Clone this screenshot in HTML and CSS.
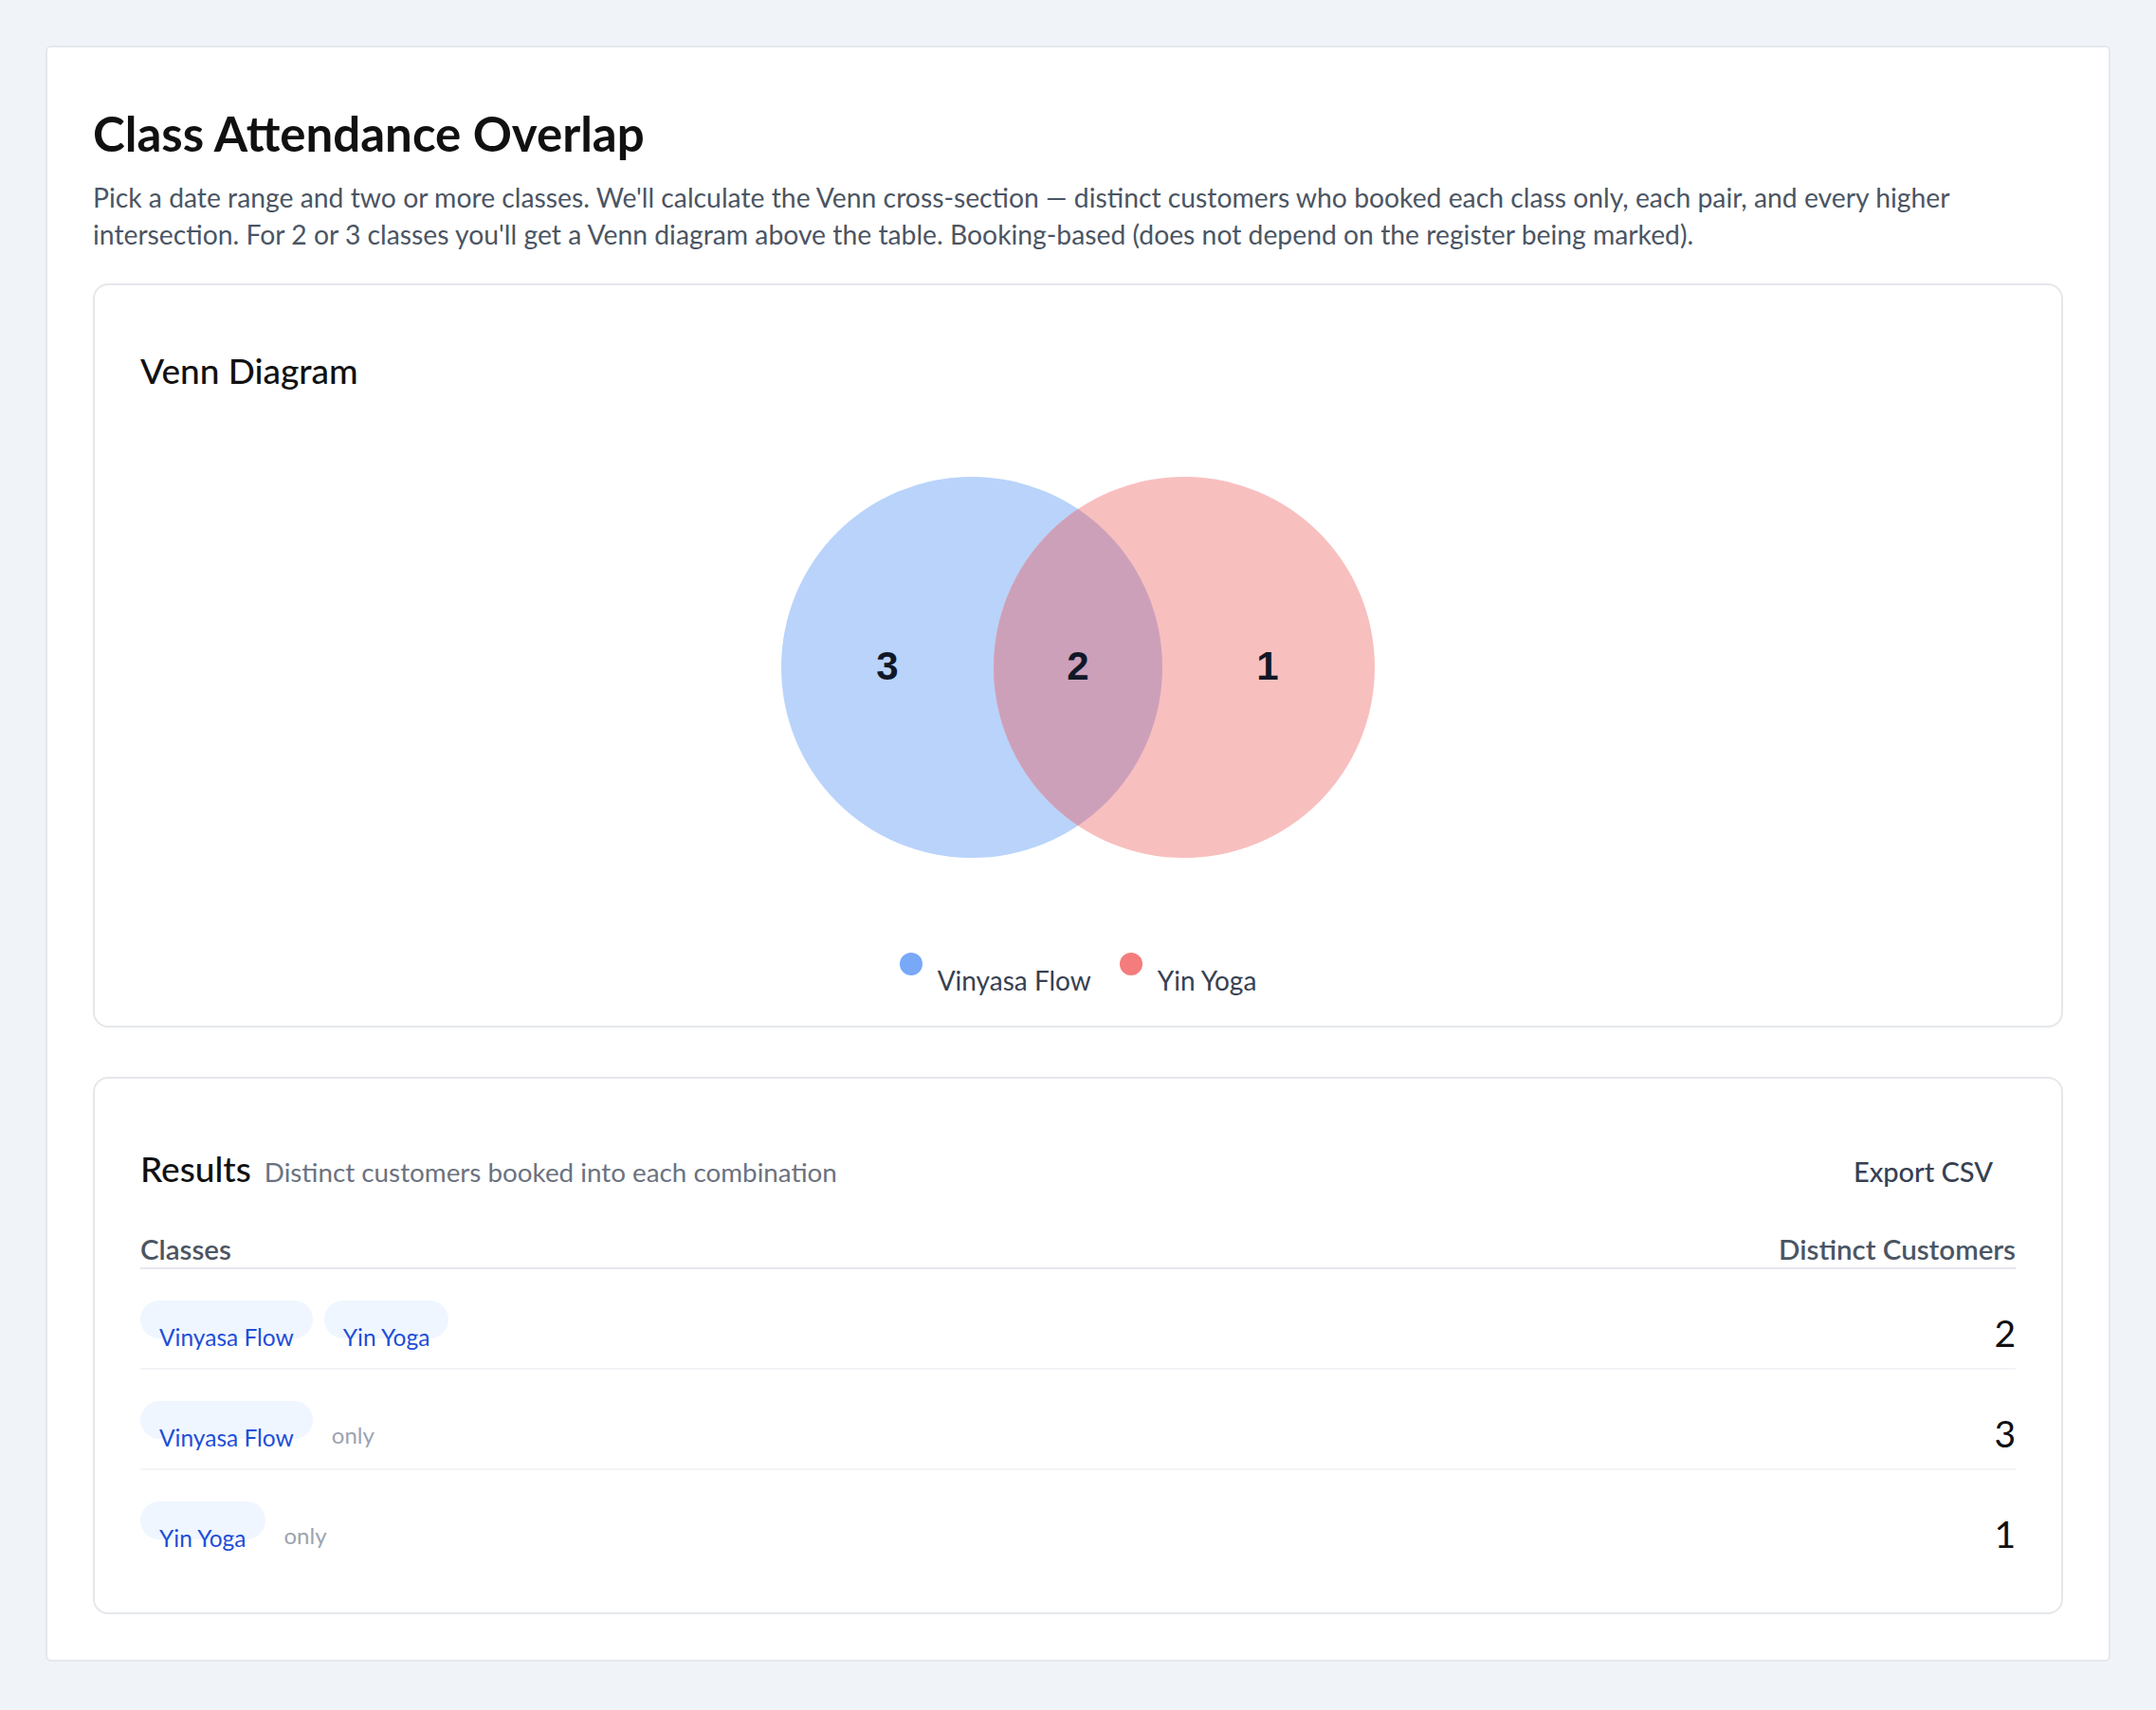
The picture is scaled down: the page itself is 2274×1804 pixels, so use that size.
FILE: index.html
```html
<!DOCTYPE html>
<html lang="en">
<head>
<meta charset="utf-8">
<title>Class Attendance Overlap</title>
<link rel="stylesheet" href="styles.css">
</head>
<body>
<main class="page">
  <h1 class="title">Class Attendance Overlap</h1>
  <p class="intro">Pick a date range and two or more classes. We'll calculate the Venn cross-section — distinct customers who booked each class only, each pair, and every higher intersection. For 2 or 3 classes you'll get a Venn diagram above the table. Booking-based (does not depend on the register being marked).</p>

  <section class="card venn-card">
    <h2 class="card-title">Venn Diagram</h2>
    <div class="venn-wrap">
      <svg class="venn" width="660" height="442" viewBox="0 0 660 442" aria-label="Venn diagram">
        <defs>
          <clipPath id="clipLeft"><circle cx="218" cy="221" r="201"/></clipPath>
        </defs>
        <circle cx="218" cy="221" r="201" fill="#b9d3fb"/>
        <circle cx="442" cy="221" r="201" fill="#f8bfbf"/>
        <circle cx="442" cy="221" r="201" fill="#cda0ba" clip-path="url(#clipLeft)"/>
        <text class="venn-num" x="129" y="234" text-anchor="middle">3</text>
        <text class="venn-num" x="330" y="234" text-anchor="middle">2</text>
        <text class="venn-num" x="530" y="234" text-anchor="middle">1</text>
      </svg>
    </div>
    <div class="legend">
      <div class="legend-item"><span class="dot dot-blue"></span><span class="legend-label">Vinyasa Flow</span></div>
      <div class="legend-item"><span class="dot dot-red"></span><span class="legend-label">Yin Yoga</span></div>
    </div>
  </section>

  <section class="card results-card">
    <div class="results-head">
      <div class="results-titles">
        <h2 class="card-title">Results</h2>
        <span class="results-sub">Distinct customers booked into each combination</span>
      </div>
      <button class="export-btn" type="button">Export CSV</button>
    </div>
    <div class="table">
      <div class="thead">
        <div class="th">Classes</div>
        <div class="th th-right">Distinct Customers</div>
      </div>
      <div class="row">
        <div class="cell-classes"><span class="pill">Vinyasa Flow</span><span class="pill">Yin Yoga</span></div>
        <div class="cell-num">2</div>
      </div>
      <div class="row">
        <div class="cell-classes"><span class="pill">Vinyasa Flow</span><span class="only">only</span></div>
        <div class="cell-num">3</div>
      </div>
      <div class="row row-last">
        <div class="cell-classes"><span class="pill">Yin Yoga</span><span class="only">only</span></div>
        <div class="cell-num">1</div>
      </div>
    </div>
  </section>
</main>
</body>
</html>
```

FILE: styles.css
```css
* { box-sizing: border-box; }

html, body {
  margin: 0;
  padding: 0;
}

body {
  background: #f0f4f9;
  padding: 48px;
  font-family: "Lato", "Noto Sans", sans-serif;
  color: #111111;
}

.page {
  background: #ffffff;
  border: 2px solid #e5e7eb;
  border-radius: 6px;
  padding: 48px 48px 48px;
}

.title {
  margin: 14px 0 0;
  font-size: 51px;
  line-height: 58px;
  font-weight: 700;
  color: #111111;
}

.intro {
  margin: 19px 0 0;
  font-size: 28.3px;
  line-height: 39px;
  color: #4b5563;
}

.card {
  background: #ffffff;
  border: 2px solid #e5e7eb;
  border-radius: 16px;
}

.venn-card {
  margin-top: 32px;
  padding: 68px 48px 31px;
}

.card-title {
  margin: 0;
  font-size: 37px;
  line-height: 43px;
  font-weight: 500;
  color: #111111;
}

.venn-wrap {
  display: flex;
  justify-content: center;
  margin-top: 71px;
}

.venn { display: block; }

.venn-num {
  font-family: "Liberation Sans", Arial, sans-serif;
  font-weight: 700;
  font-size: 42px;
  fill: #111827;
}

.legend {
  display: flex;
  justify-content: center;
  gap: 30px;
  margin-top: 80px;
}

.legend-item {
  display: flex;
  align-items: flex-start;
  gap: 16px;
}

.dot {
  width: 24px;
  height: 24px;
  border-radius: 50%;
  flex: none;
}

.dot-blue { background: #78a8f8; }
.dot-red { background: #f47c7c; }

.legend-label {
  margin-top: 12px;
  font-size: 28px;
  line-height: 34px;
  color: #374151;
}

.results-card {
  margin-top: 52px;
  padding: 69px 48px 46px;
}

.results-head {
  display: flex;
  justify-content: space-between;
  align-items: baseline;
}

.results-titles {
  display: flex;
  align-items: baseline;
  gap: 14px;
}

.results-sub {
  font-size: 27.8px;
  line-height: 32px;
  color: #6b7280;
}

.export-btn {
  font-family: inherit;
  font-size: 29px;
  line-height: 34px;
  font-weight: 500;
  color: #374151;
  background: transparent;
  border: none;
  padding: 12px 24px;
  border-radius: 10px;
}

.table { margin-top: 36px; }

.thead {
  display: flex;
  justify-content: space-between;
  padding-bottom: 2px;
  border-bottom: 2px solid #e5e7eb;
}

.th {
  font-size: 29.5px;
  line-height: 34px;
  font-weight: 600;
  color: #4b5563;
}

.row {
  display: flex;
  justify-content: space-between;
  align-items: flex-start;
  height: 106px;
  border-bottom: 2px solid #f3f4f6;
}

.row-last { border-bottom: none; height: 104px; }

.cell-classes {
  display: flex;
  align-items: flex-start;
  gap: 12px;
  padding-top: 33px;
}

.pill {
  display: inline-block;
  height: 40px;
  padding: 25px 20px 0;
  font-size: 24.5px;
  line-height: 28px;
  color: #1d4ed8;
  background: #eff6ff;
  border-radius: 20px;
  white-space: nowrap;
}

.only {
  margin: 21px 0 0 8px;
  font-size: 24px;
  line-height: 30px;
  color: #9ca3af;
}

.cell-num {
  padding-top: 44px;
  font-size: 39px;
  line-height: 46px;
  color: #111111;
}
```
